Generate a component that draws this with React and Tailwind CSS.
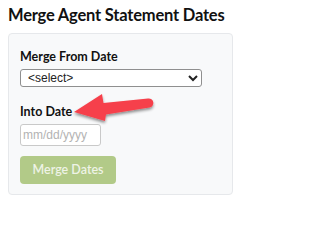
import React from "react";

export default function App() {
  return (
    <div className="relative w-[243px] h-[206px] bg-white overflow-hidden">
      <div className="pl-[8px] pr-[10px] pt-[6px]">
        <h1 className="whitespace-nowrap font-['Lato',sans-serif] font-bold text-[16.5px] leading-[18px] text-[#111] tracking-[-0.2px]">
          Merge Agent Statement Dates
        </h1>
        <div className="mt-[9px] h-[162px] rounded-[4px] border border-[#e6e8eb] bg-[#f8f9fa] px-[11px] pt-[15px]">
          <label className="block whitespace-nowrap font-['Lato',sans-serif] font-bold text-[12.5px] leading-[16px] text-[#111]">
            Merge From Date
          </label>
          <select className="mt-[4px] block w-[182px] h-[18px] rounded-[3px] border border-[#8f8f8f] bg-white pl-[3px] font-['Liberation_Sans',sans-serif] text-[12px] leading-[16px] text-[#222]">
            <option>&lt;select&gt;</option>
          </select>
          <label className="mt-[17px] block font-['Lato',sans-serif] font-bold text-[12.5px] leading-[16px] text-[#111]">
            Into Date
          </label>
          <input
            placeholder="mm/dd/yyyy"
            className="mt-[4px] block w-[81px] h-[22px] rounded-[3px] border border-[#c9c9c9] bg-white px-[2px] font-['Liberation_Sans',sans-serif] text-[12px] text-[#333] placeholder:text-[#b3b3b3]"
          />
          <button className="mt-[10px] block w-[96px] h-[28px] rounded-[4px] bg-[#b2ca88] font-['Lato',sans-serif] text-[12.5px] font-semibold text-[#eef3e6]">
            Merge Dates
          </button>
        </div>
      </div>
      <svg className="absolute left-0 top-0" width="243" height="206" viewBox="0 0 243 206">
        <defs>
          <filter id="sh" x="-20%" y="-20%" width="140%" height="160%">
            <feGaussianBlur in="SourceAlpha" stdDeviation="1.6" />
            <feOffset dx="0" dy="2" result="b" />
            <feComponentTransfer><feFuncA type="linear" slope="0.45" /></feComponentTransfer>
            <feMerge><feMergeNode /><feMergeNode in="SourceGraphic" /></feMerge>
          </filter>
        </defs>
        <g filter="url(#sh)" fill="#f6414b">
          <path d="M74 112 L102 94 L103.5 103 L148 98.5 A4.6 4.6 0 0 1 149.5 107.6 L106 114.5 L105 121 Z" />
        </g>
      </svg>
    </div>
  );
}
